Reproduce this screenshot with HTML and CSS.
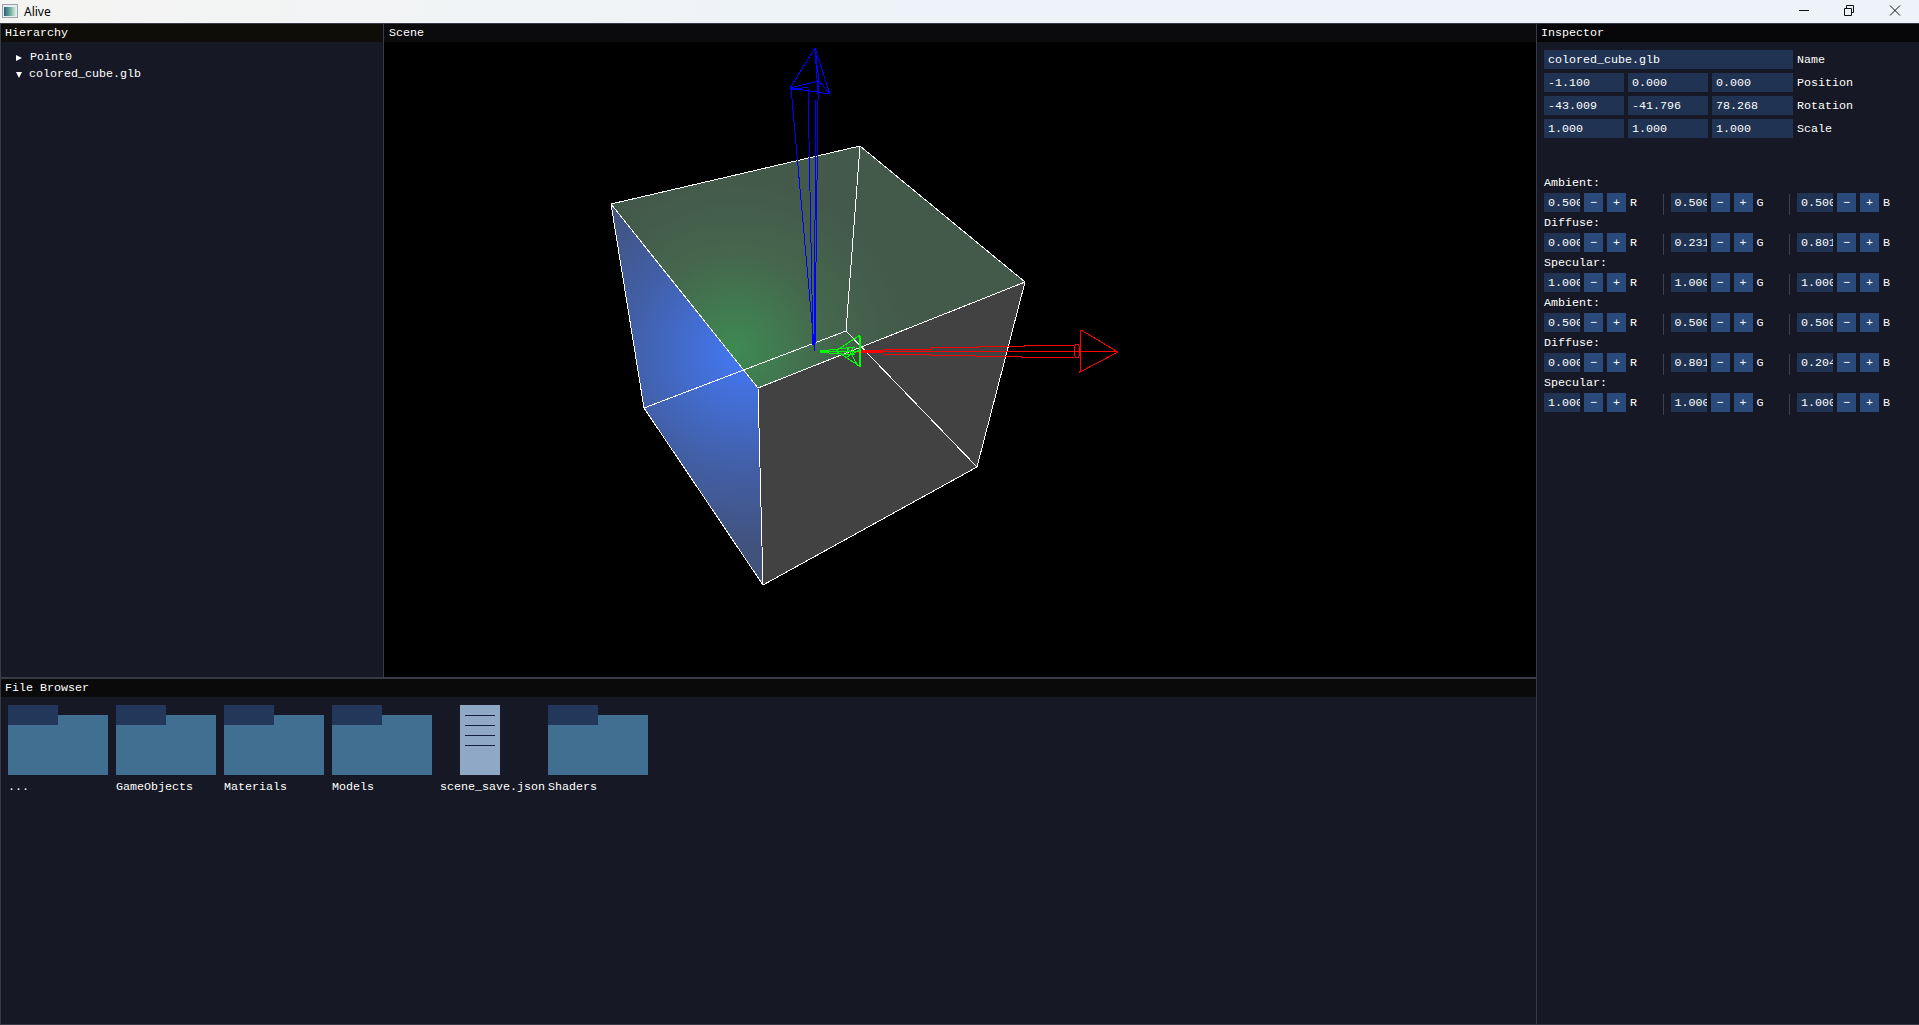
FILE: index.html
```html
<!DOCTYPE html>
<html lang="en">
<head>
<meta charset="utf-8">
<title>Alive</title>
<link rel="stylesheet" href="styles.css">
</head>
<body>
<header class="titlebar">
  <svg class="app-icon" width="16" height="14" viewBox="0 0 16 14"><defs><linearGradient id="iconGrad" x1="0" x2="1" y1="0" y2="0"><stop offset="0" stop-color="#26607c"/><stop offset="0.6" stop-color="#7fb8a0"/><stop offset="1" stop-color="#e4ecee"/></linearGradient></defs><rect x="0.5" y="0.5" width="15" height="13" fill="#e8eef0" stroke="#9aa3ad"/><rect x="2" y="3" width="12" height="9" fill="url(#iconGrad)"/></svg>
  <span class="app-name">Alive</span>
  <div class="win-controls">
    <svg width="46" height="23" viewBox="0 0 46 23"><path d="M19 10.5H29" stroke="#111" fill="none"/></svg>
    <svg width="46" height="23" viewBox="0 0 46 23"><path d="M18.5 8.5h7v7h-7zM20.5 8V5.5h7v7H26" stroke="#111" fill="none"/></svg>
    <svg width="46" height="23" viewBox="0 0 46 23"><path d="M18 5.5L28 15.5M28 5.5L18 15.5" stroke="#111" fill="none"/></svg>
  </div>
</header>
<main class="workspace">
  <div class="left-col">
    <div class="top-row">
      <section class="panel hierarchy">
        <h2 class="panel-title title-hier">Hierarchy</h2>
        <ul class="tree">
          <li class="tree-item"><span class="arrow-right"></span>Point0</li>
          <li class="tree-item"><span class="arrow-down"></span>colored_cube.glb</li>
        </ul>
      </section>
      <section class="panel scene">
        <h2 class="panel-title title-scene">Scene</h2>
        <svg class="viewport" viewBox="384 42 1152 635" shape-rendering="crispEdges">
          <defs>
            <radialGradient id="gradGreen" gradientUnits="userSpaceOnUse" cx="735" cy="350" r="175">
              <stop offset="0" stop-color="#3e8a52"/><stop offset="0.55" stop-color="#45664d"/><stop offset="1" stop-color="#43594a"/>
            </radialGradient>
            <radialGradient id="gradBlue" gradientUnits="userSpaceOnUse" cx="745" cy="352" r="195">
              <stop offset="0" stop-color="#4379f7"/><stop offset="0.6" stop-color="#425fa6"/><stop offset="1" stop-color="#41527d"/>
            </radialGradient>
          </defs>
          <polygon points="611,204 860,146 1025,282 758,388" fill="url(#gradGreen)"/>
          <polygon points="611,204 758,388 763,585 644,408" fill="url(#gradBlue)"/>
          <polygon points="758,388 1025,282 977,467 763,585" fill="#424242"/>
          <g stroke="#fff" fill="none" stroke-width="1">
            <polygon points="611,204 860,146 1025,282 758,388"/>
            <polyline points="611,204 644,408 763,585 977,467 1025,282"/>
            <line x1="758" y1="388" x2="763" y2="585"/>
            <polyline points="860,146 846,331 644,408"/>
            <line x1="846" y1="331" x2="977" y2="467"/>
          </g>
          <g stroke="#0000ff" fill="none" stroke-width="1">
            <line x1="791" y1="88" x2="814" y2="345"/>
            <line x1="808" y1="88" x2="813" y2="345"/>
            <line x1="816" y1="100" x2="814" y2="345"/>
            <line x1="818" y1="100" x2="815" y2="345"/>
            <line x1="814" y1="322" x2="814" y2="351"/>
            <line x1="815" y1="322" x2="815" y2="343"/>
            <polyline points="790,88 815,48 830,94 790,88 819,81 830,94"/>
            <polyline points="815,48 819,81 818,100"/>
            <polyline points="815,48 818,94"/>
            <line x1="790" y1="90" x2="808" y2="87"/>
          </g>
          <g stroke="#ff0000" fill="none" stroke-width="1">
            <line x1="837" y1="351" x2="1118" y2="351"/>
            <rect x="857" y="350" width="26" height="3" fill="#ff0000" stroke="none"/>
            <polyline points="883,349 931,349 931,347 977,347 977,346 1024,346 1024,345 1074,345"/>
            <polyline points="883,354 930,354 930,355 975,355 975,356 1021,356 1021,357 1074,357"/>
            <polygon points="1081,330 1118,352 1080,372"/>
            <line x1="1081" y1="330" x2="1080" y2="372"/>
            <ellipse cx="1077" cy="351" rx="3" ry="7"/>
          </g>
          <g stroke="#00ff00" fill="none" stroke-width="1">
            <rect x="820" y="350" width="9" height="3" fill="#00ff00" stroke="none"/>
            <line x1="829" y1="351" x2="860" y2="351"/>
            <line x1="829" y1="350" x2="855" y2="347"/>
            <line x1="829" y1="353" x2="855" y2="355"/>
            <polygon points="836,351 860,335 861,367"/>
            <line x1="848" y1="348" x2="858" y2="366"/>
            <line x1="845" y1="358" x2="859" y2="350"/>
            <ellipse cx="850" cy="351" rx="3" ry="4"/>
            <line x1="859" y1="335" x2="860" y2="367"/>
          </g>
        </svg>
      </section>
    </div>
    <section class="panel browser">
      <h2 class="panel-title title-browser">File Browser</h2>
      <div class="file-grid">
        <figure class="entry"><div class="folder"><div class="folder-tab"></div></div><figcaption>...</figcaption></figure>
        <figure class="entry"><div class="folder"><div class="folder-tab"></div></div><figcaption>GameObjects</figcaption></figure>
        <figure class="entry"><div class="folder"><div class="folder-tab"></div></div><figcaption>Materials</figcaption></figure>
        <figure class="entry"><div class="folder"><div class="folder-tab"></div></div><figcaption>Models</figcaption></figure>
        <figure class="entry"><div class="doc"><i></i><i></i><i></i><i></i></div><figcaption>scene_save.json</figcaption></figure>
        <figure class="entry"><div class="folder"><div class="folder-tab"></div></div><figcaption>Shaders</figcaption></figure>
      </div>
    </section>
  </div>
  <section class="panel inspector">
    <h2 class="panel-title title-insp">Inspector</h2>
    <div class="transform">
      <div class="field wide">colored_cube.glb</div><label>Name</label>
      <div class="field">-1.100</div><div class="field">0.000</div><div class="field">0.000</div><label>Position</label>
      <div class="field">-43.009</div><div class="field">-41.796</div><div class="field">78.268</div><label>Rotation</label>
      <div class="field">1.000</div><div class="field">1.000</div><div class="field">1.000</div><label>Scale</label>
    </div>
    <div class="materials">
      <p class="mat-label">Ambient:</p>
      <div class="rgb"><div class="ch"><span class="num">0.500</span><button>−</button><button>+</button><span class="ch-name">R</span></div><div class="ch"><span class="num">0.500</span><button>−</button><button>+</button><span class="ch-name">G</span></div><div class="ch"><span class="num">0.500</span><button>−</button><button>+</button><span class="ch-name">B</span></div></div>
      <p class="mat-label">Diffuse:</p>
      <div class="rgb"><div class="ch"><span class="num">0.000</span><button>−</button><button>+</button><span class="ch-name">R</span></div><div class="ch"><span class="num">0.231</span><button>−</button><button>+</button><span class="ch-name">G</span></div><div class="ch"><span class="num">0.801</span><button>−</button><button>+</button><span class="ch-name">B</span></div></div>
      <p class="mat-label">Specular:</p>
      <div class="rgb"><div class="ch"><span class="num">1.000</span><button>−</button><button>+</button><span class="ch-name">R</span></div><div class="ch"><span class="num">1.000</span><button>−</button><button>+</button><span class="ch-name">G</span></div><div class="ch"><span class="num">1.000</span><button>−</button><button>+</button><span class="ch-name">B</span></div></div>
      <p class="mat-label">Ambient:</p>
      <div class="rgb"><div class="ch"><span class="num">0.500</span><button>−</button><button>+</button><span class="ch-name">R</span></div><div class="ch"><span class="num">0.500</span><button>−</button><button>+</button><span class="ch-name">G</span></div><div class="ch"><span class="num">0.500</span><button>−</button><button>+</button><span class="ch-name">B</span></div></div>
      <p class="mat-label">Diffuse:</p>
      <div class="rgb"><div class="ch"><span class="num">0.000</span><button>−</button><button>+</button><span class="ch-name">R</span></div><div class="ch"><span class="num">0.801</span><button>−</button><button>+</button><span class="ch-name">G</span></div><div class="ch"><span class="num">0.204</span><button>−</button><button>+</button><span class="ch-name">B</span></div></div>
      <p class="mat-label">Specular:</p>
      <div class="rgb"><div class="ch"><span class="num">1.000</span><button>−</button><button>+</button><span class="ch-name">R</span></div><div class="ch"><span class="num">1.000</span><button>−</button><button>+</button><span class="ch-name">G</span></div><div class="ch"><span class="num">1.000</span><button>−</button><button>+</button><span class="ch-name">B</span></div></div>
    </div>
  </section>
</main>
</body>
</html>
```
FILE: styles.css
```css
* { box-sizing: border-box; }
html, body { margin: 0; height: 100%; }
body {
  width: 1919px; height: 1025px; overflow: hidden;
  display: flex; flex-direction: column;
  background: #161925; color: #fff;
  font: 11.67px/13px "Liberation Mono", monospace;
}
.titlebar {
  height: 23px; flex: none; display: flex; align-items: center; padding-left: 2px;
  background: linear-gradient(90deg, #f4f4f2 0, #eef3f8 45%, #edf3f8 100%); color: #000;
}
.app-icon { margin-right: 6px; margin-top: -1px; }
.app-name { font: 12px "Noto Sans", sans-serif; margin-top: -1px; }
.win-controls { margin-left: auto; display: flex; padding-right: 1px; }
.workspace { flex: 1; display: flex; min-height: 0; }
.left-col { width: 1536px; flex: none; display: flex; flex-direction: column; }
.top-row { height: 655px; flex: none; display: flex; }
.panel { background: #161925; border: 1px solid #383a48; display: flex; flex-direction: column; min-height: 0; }
.panel-title { margin: 0; height: 18px; flex: none; padding: 3px 4px 0; font: inherit; }
.title-hier { background: #0f0d07; }
.title-scene { background: #0b0b0d; padding-left: 5px; }
.title-insp { background: #060608; }
.title-browser { background: #0a0a0a; }
.hierarchy { width: 384px; flex: none; }
.tree { list-style: none; margin: 0; padding: 8px 0 0 15px; }
.tree-item { height: 17px; display: flex; align-items: center; padding-bottom: 2px; }
.arrow-right, .arrow-down { width: 0; height: 0; flex: none; }
.arrow-right { margin-right: 8px; border-left: 6px solid #fff; border-top: 3.5px solid transparent; border-bottom: 3.5px solid transparent; }
.arrow-down { margin-right: 7px; border-top: 6px solid #fff; border-left: 3.5px solid transparent; border-right: 3.5px solid transparent; }
.scene { flex: 1; background: #000; border-left: 0; border-right: 0; }
.viewport { display: block; width: 1152px; height: 635px; background: #000; }
.browser { flex: 1; border-right: 0; }
.file-grid { display: grid; grid-template-columns: repeat(6, 100px); column-gap: 8px; padding: 8px 7px; }
.entry { margin: 0; width: 100px; }
.entry figcaption { margin-top: 6px; white-space: nowrap; }
.folder { height: 70px; position: relative; background: linear-gradient(#161925 0 10px, #416f91 10px); }
.folder-tab { position: absolute; left: 0; top: 0; width: 50px; height: 20px; background: #23375b; }
.doc { width: 40px; height: 70px; margin-left: 20px; background: #8ea8c6; padding: 10px 5px 0; display: flex; flex-direction: column; gap: 9px; }
.doc i { display: block; height: 1px; background: #11203f; }
.inspector { flex: 1; }
.transform { display: grid; grid-template-columns: 80px 80px 81px auto; gap: 4px; padding: 8px 6px 0 7px; }
.field { height: 19px; background: #203352; padding: 4px 4px 0; white-space: nowrap; }
.field.wide { grid-column: span 3; }
.transform label { height: 19px; padding-top: 4px; }
.materials { margin-top: 38px; padding-left: 7px; }
.mat-label { margin: 0; height: 17px; padding-top: 1px; line-height: 13px; }
.rgb { display: flex; height: 23px; }
.ch { width: 126.5px; display: flex; gap: 4px; height: 19px; position: relative; }
.ch + .ch::before { content: ""; position: absolute; left: -8px; top: 1px; width: 1px; height: 21px; background: #3f4150; }
.num { width: 36px; height: 19px; background: #203352; padding: 4px 0 0 4px; overflow: hidden; white-space: nowrap; flex: none; }
button { width: 19px; height: 19px; padding: 1px 0 0; border: 0; background: #294a7a; color: #fff; font: inherit; flex: none; }
.ch-name { padding-top: 4px; }
```
